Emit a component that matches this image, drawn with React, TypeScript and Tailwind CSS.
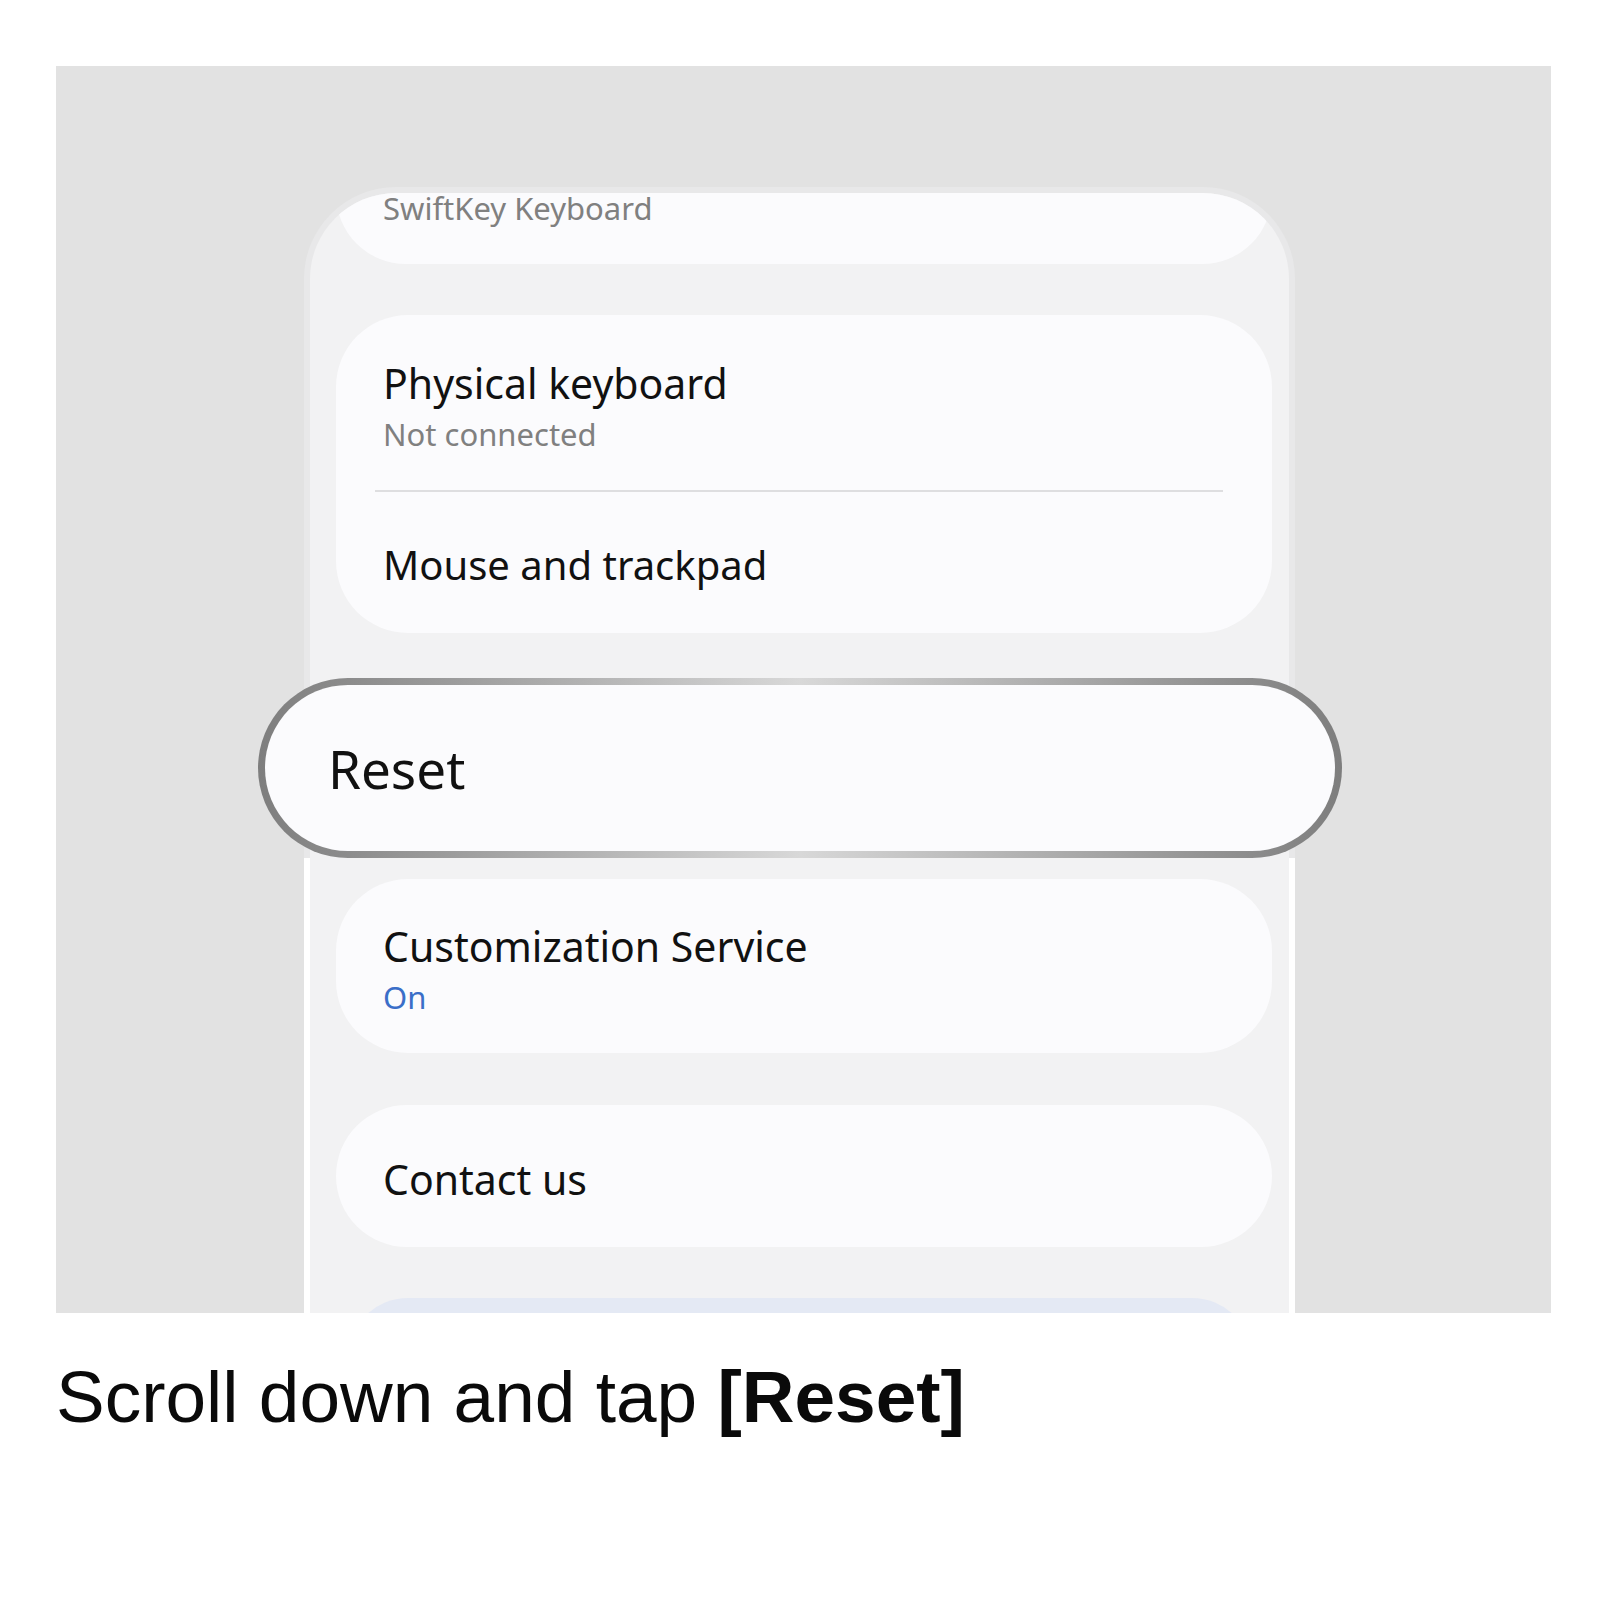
export default function App() {
  const sans = { fontFamily: '"Noto Sans", "Open Sans", sans-serif' };
  return (
    <div className="w-[1600px] h-[1610px] bg-white overflow-hidden">
      {/* grey stage */}
      <div className="ml-[56px] mt-[66px] w-[1495px] h-[1247px] bg-[#e2e2e2] overflow-hidden" style={sans}>
        <div className="ml-[248px] mt-[121px] w-[991px] flex flex-col">
          {/* upper screen part */}
          <div className="h-[491px] rounded-t-[92px] border-t-[6px] border-x-[6px] border-[#e8e8e9] bg-[#f2f2f3] overflow-hidden">
            <div className="ml-[26px] w-[936px] h-[71px] bg-[#fbfbfd] rounded-b-[70px] pl-[47px]">
              <div className="text-[31px] leading-[30px] text-[#808080]">SwiftKey Keyboard</div>
            </div>
            <div className="ml-[26px] mt-[51px] w-[936px] h-[318px] bg-[#fbfbfd] rounded-[72px] pt-[44px]">
              <div className="pl-[47px] text-[41px] leading-[48px] text-[#111]">Physical keyboard</div>
              <div className="pl-[47px] mt-[8px] text-[31px] leading-[38px] text-[#808080]">Not connected</div>
              <div className="ml-[39px] mr-[49px] mt-[37px] h-[2px] bg-[#dedee0]" />
              <div className="pl-[47px] mt-[49px] text-[40px] leading-[48px] text-[#111]">Mouse and trackpad</div>
            </div>
          </div>

          {/* highlighted row */}
          <div className="h-[180px] border-x-[6px] border-[#e8e8e9] bg-[#f2f2f3]">
            <div className="-ml-[52px] -mr-[53px] h-[180px] rounded-full p-[7px] bg-[linear-gradient(to_right,#7e7e7e,#9c9c9c_18%,#d8d8d8_50%,#9c9c9c_82%,#7e7e7e)]">
              <div className="h-[166px] rounded-full bg-[#fbfbfd] pl-[63px] pt-[52px]">
                <div className="text-[53px] leading-[64px] text-[#111]">Reset</div>
              </div>
            </div>
          </div>

          {/* lower screen part */}
          <div className="h-[460px] border-x-[6px] border-white bg-[#f2f2f3] pt-[21px]">
            <div className="ml-[26px] w-[936px] h-[174px] bg-[#fbfbfd] rounded-[72px] pt-[43px] pl-[47px]">
              <div className="text-[41px] leading-[48px] text-[#111]">Customization Service</div>
              <div className="mt-[8px] text-[31px] leading-[38px] text-[#3a6ec8]">On</div>
            </div>
            <div className="ml-[26px] mt-[52px] w-[936px] h-[142px] bg-[#fbfbfd] rounded-[72px] pt-[50px] pl-[47px]">
              <div className="text-[41px] leading-[48px] text-[#111]">Contact us</div>
            </div>
            <div className="ml-[38px] mt-[51px] w-[904px] h-[120px] bg-[#e4e9f4] rounded-[72px]" />
          </div>
        </div>
      </div>

      {/* caption */}
      <div
        className="ml-[56px] mt-[44px] text-[73px] leading-[80px] text-[#0a0a0a]"
        style={{ fontFamily: '"Liberation Sans", Arial, sans-serif' }}
      >
        Scroll down and tap <span className="font-bold">[Reset]</span>
      </div>
    </div>
  );
}
